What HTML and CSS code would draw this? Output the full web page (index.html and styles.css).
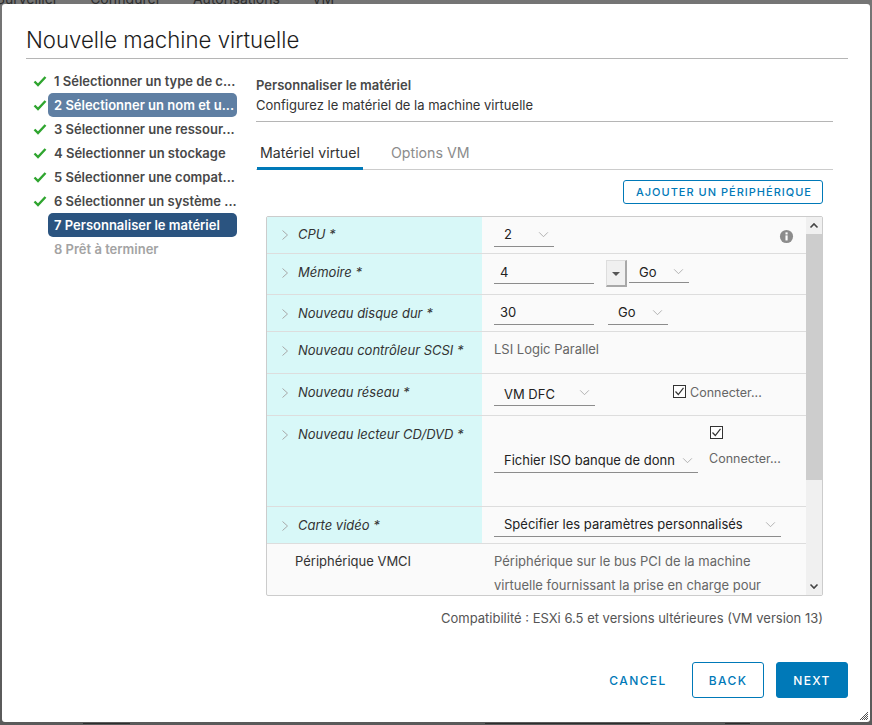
FILE: index.html
```html
<!DOCTYPE html>
<html>
<head>
  <meta charset="utf-8" />
  <title>Nouvelle machine virtuelle</title>
  <link rel="stylesheet" href="styles.css">
</head>
<body>
<!-- page behind the dialog -->
<div class="backdrop">
  <div class="backdropTop">
    <span>Surveiller</span><span>Configurer</span><span>Autorisations</span><span>VM</span>
  </div>
  <div class="backdropBottom">
    <span class="mark mark1"></span><span class="mark mark2"></span><span class="mark mark3"></span>
  </div>
</div>

<div class="modal">
  <h1 class="modalTitle">Nouvelle machine virtuelle</h1>

  <div class="modalBody">
    <!-- LEFT COLUMN -->
    <ul class="steps">
      <li class="step done"><svg class="check" viewBox="0 0 14 12"><path d="M1.5 6.5 5 10 12.5 2"/></svg><span class="stepText">1 Sélectionner un type de c...</span></li>
      <li class="step done visited"><svg class="check" viewBox="0 0 14 12"><path d="M1.5 6.5 5 10 12.5 2"/></svg><span class="stepText">2 Sélectionner un nom et u...</span></li>
      <li class="step done"><svg class="check" viewBox="0 0 14 12"><path d="M1.5 6.5 5 10 12.5 2"/></svg><span class="stepText">3 Sélectionner une ressour...</span></li>
      <li class="step done"><svg class="check" viewBox="0 0 14 12"><path d="M1.5 6.5 5 10 12.5 2"/></svg><span class="stepText">4 Sélectionner un stockage</span></li>
      <li class="step done"><svg class="check" viewBox="0 0 14 12"><path d="M1.5 6.5 5 10 12.5 2"/></svg><span class="stepText">5 Sélectionner une compat...</span></li>
      <li class="step done"><svg class="check" viewBox="0 0 14 12"><path d="M1.5 6.5 5 10 12.5 2"/></svg><span class="stepText">6 Sélectionner un système ...</span></li>
      <li class="step current"><span class="stepText">7 Personnaliser le matériel</span></li>
      <li class="step pending"><span class="stepText">8 Prêt à terminer</span></li>
    </ul>

    <!-- RIGHT COLUMN -->
    <div class="content">
      <div class="contentHeader">
        <h2>Personnaliser le matériel</h2>
        <p>Configurez le matériel de la machine virtuelle</p>
      </div>

      <div class="tabs">
        <div class="tab active">Matériel virtuel</div>
        <div class="tab">Options VM</div>
      </div>

      <div class="toolbar">
        <button class="btn btnAdd">AJOUTER UN PÉRIPHÉRIQUE</button>
      </div>

      <div class="hwTable">
        <div class="hwRows">
          <div class="row rowCpu">
            <div class="rowLabel"><svg class="caret" viewBox="0 0 8 12"><path d="M1.5 1.5 6.5 6 1.5 10.5"/></svg>CPU *</div>
            <div class="rowValue">
              <div class="select w60">2<svg class="chev" viewBox="0 0 12 8"><path d="M1 1.5 6 6.5 11 1.5"/></svg></div>
              <svg class="info" viewBox="0 0 16 16"><circle cx="8" cy="8" r="7" fill="#8c8c8c"/><rect x="6.9" y="6.8" width="2.3" height="5.4" fill="#fff"/><rect x="6.9" y="3.6" width="2.3" height="2.2" fill="#fff"/></svg>
            </div>
          </div>
          <div class="row rowMem">
            <div class="rowLabel"><svg class="caret" viewBox="0 0 8 12"><path d="M1.5 1.5 6.5 6 1.5 10.5"/></svg>Mémoire *</div>
            <div class="rowValue">
              <div class="input">4</div>
              <div class="spin"><span class="spinArrow"></span></div>
              <div class="select w60 tight">Go<svg class="chev" viewBox="0 0 12 8"><path d="M1 1.5 6 6.5 11 1.5"/></svg></div>
            </div>
          </div>
          <div class="row rowDisk">
            <div class="rowLabel"><svg class="caret" viewBox="0 0 8 12"><path d="M1.5 1.5 6.5 6 1.5 10.5"/></svg>Nouveau disque dur *</div>
            <div class="rowValue">
              <div class="input">30</div>
              <div class="select w60 after">Go<svg class="chev" viewBox="0 0 12 8"><path d="M1 1.5 6 6.5 11 1.5"/></svg></div>
            </div>
          </div>
          <div class="row rowScsi">
            <div class="rowLabel"><svg class="caret" viewBox="0 0 8 12"><path d="M1.5 1.5 6.5 6 1.5 10.5"/></svg>Nouveau contrôleur SCSI *</div>
            <div class="rowValue muted">LSI Logic Parallel</div>
          </div>
          <div class="row rowNet">
            <div class="rowLabel"><svg class="caret" viewBox="0 0 8 12"><path d="M1.5 1.5 6.5 6 1.5 10.5"/></svg>Nouveau réseau *</div>
            <div class="rowValue">
              <div class="select w101">VM DFC<svg class="chev" viewBox="0 0 12 8"><path d="M1 1.5 6 6.5 11 1.5"/></svg></div>
              <svg class="checkbox netBox" viewBox="0 0 13 13"><rect x=".5" y=".5" width="12" height="12" fill="#fff" stroke="#333"/><path d="M2.5 6.5 5.3 9.5 10.5 2.8" fill="none" stroke="#333" stroke-width="1.2"/></svg>
              <span class="connect">Connecter...</span>
            </div>
          </div>
          <div class="row rowCd">
            <div class="rowLabel"><svg class="caret" viewBox="0 0 8 12"><path d="M1.5 1.5 6.5 6 1.5 10.5"/></svg>Nouveau lecteur CD/DVD *</div>
            <div class="rowValue">
              <div class="select w204">Fichier ISO banque de donn<svg class="chev" viewBox="0 0 12 8"><path d="M1 1.5 6 6.5 11 1.5"/></svg></div>
              <div class="cdConnect">
                <svg class="checkbox" viewBox="0 0 13 13"><rect x=".5" y=".5" width="12" height="12" fill="#fff" stroke="#333"/><path d="M2.5 6.5 5.3 9.5 10.5 2.8" fill="none" stroke="#333" stroke-width="1.2"/></svg>
                <span class="connect">Connecter...</span>
              </div>
            </div>
          </div>
          <div class="row rowVideo">
            <div class="rowLabel"><svg class="caret" viewBox="0 0 8 12"><path d="M1.5 1.5 6.5 6 1.5 10.5"/></svg>Carte vidéo *</div>
            <div class="rowValue">
              <div class="select w287">Spécifier les paramètres personnalisés<svg class="chev" viewBox="0 0 12 8"><path d="M1 1.5 6 6.5 11 1.5"/></svg></div>
            </div>
          </div>
          <div class="row rowVmci">
            <div class="vmciLabel">Périphérique VMCI</div>
            <div class="vmciText muted">Périphérique sur le bus PCI de la machine virtuelle fournissant la prise en charge pour</div>
          </div>
        </div>

        <div class="scrollbar">
          <div class="scrollBtn"><svg viewBox="0 0 10 7"><path d="M1.5 5.5 5 2 8.5 5.5"/></svg></div>
          <div class="scrollTrack"><div class="scrollThumb"></div></div>
          <div class="scrollBtn"><svg viewBox="0 0 10 7"><path d="M1.5 1.5 5 5 8.5 1.5"/></svg></div>
        </div>
      </div>

      <div class="compat">Compatibilité : ESXi 6.5 et versions ultérieures (VM version 13)</div>
    </div>
  </div>

  <div class="modalFooter">
    <button class="btn btnLink">CANCEL</button>
    <button class="btn btnOutline">BACK</button>
    <button class="btn btnPrimary">NEXT</button>
  </div>

  <svg class="resizer" viewBox="0 0 8 8"><path d="M0 8 8 0M2 8 8 2M4 8 8 4M6 8 8 6"/></svg>
</div>
</body>
</html>
```

FILE: styles.css
```css
html, body {
  margin: 0;
  padding: 0;
  height: 100%;
  font-family: Inter, "Noto Sans", sans-serif;
  box-sizing: border-box;
}
*, *::before, *::after {
  box-sizing: inherit;
}

body {
  background: #5e5e5e;
  overflow: hidden;
  padding: 4px 2px 3px;
}

/* Page behind the dialog */
.backdrop {
  position: absolute;
  top: 0;
  left: 0;
  width: 100%;
  height: 100%;
  background: linear-gradient(#757575, #5a5a5a);
  display: flex;
  flex-direction: column;
  justify-content: space-between;
  overflow: hidden;
}
.backdropTop {
  display: flex;
  gap: 32px;
  margin: -10px 0 0 -4px;
  color: #2e2e2e;
  font-size: 14px;
}
.backdropBottom {
  display: flex;
  height: 2px;
  margin-left: 83px;
}
.mark {
  display: block;
  height: 1px;
  background: #2e2e2e;
}
.mark1 { width: 47px; }
.mark2 { width: 165px; margin-left: 355px; }
.mark3 { width: 25px; margin-left: 75px; }

/* Dialog */
.modal {
  position: relative;
  height: 100%;
  display: flex;
  flex-direction: column;
  background: #fff;
  border-radius: 3px;
  padding: 23px 22px 24px 24px;
  color: #333;
}
.modalTitle {
  margin: 0;
  height: 32px;
  border-bottom: 1px solid #b5b5b5;
  font-size: 22.2px;
  line-height: 26px;
  font-weight: 300;
  color: #1c1c1c;
}
.modalBody {
  flex: 1 1 auto;
  display: flex;
  min-height: 0;
}

/* Left column */
.steps {
  flex: 0 0 230px;
  list-style: none;
  margin: 10px 0 0;
  padding: 0;
}
.step {
  position: relative;
  height: 24px;
  margin-left: 22px;
  padding-left: 6px;
  width: 189px;
  border-radius: 5px;
  font-size: 13px;
  font-weight: 600;
  line-height: 24px;
  white-space: nowrap;
  color: #484848;
}
.stepText {
  display: block;
}
.check {
  position: absolute;
  left: -15px;
  top: 6px;
  width: 14px;
  height: 12px;
  fill: none;
  stroke: #2fa52f;
  stroke-width: 2.4;
}
.visited {
  background: #5f7fa3;
  color: #fff;
}
.current {
  background: #2b5480;
  color: #fff;
}
.pending {
  color: #a3a3a3;
}

/* Right column */
.content {
  flex: 0 0 577px;
  display: flex;
  flex-direction: column;
}
.contentHeader {
  height: 63px;
  padding-top: 19px;
  border-bottom: 1px solid #b5b5b5;
}
.contentHeader h2 {
  margin: 0;
  font-size: 13px;
  line-height: 14px;
  font-weight: 600;
  color: #484848;
}
.contentHeader p {
  margin: 5px 0 0;
  font-size: 13px;
  line-height: 16px;
  color: #333;
}

.tabs {
  display: flex;
  gap: 24px;
  height: 48px;
  border-bottom: 1px solid #ccc;
  font-size: 14.2px;
  align-items: flex-end;
}
.tab {
  padding: 0 4px 6px;
  height: 26px;
  line-height: 20px;
  color: #8c8c8c;
}
.tab.active {
  padding: 0 3px 2px;
  margin-left: 1px;
  color: #333;
  border-bottom: 3px solid #0079b8;
  margin-bottom: -1px;
  height: 27px;
}

.toolbar {
  display: flex;
  justify-content: flex-end;
  margin: 10px 10px 12px 0;
}

/* Buttons */
.btn {
  font-family: inherit;
  font-weight: 500;
  cursor: pointer;
  border-radius: 3px;
  border: 1px solid #0079b8;
  letter-spacing: 1px;
}
.btnAdd {
  width: 200px;
  height: 24px;
  padding: 0 0 0 2px;
  font-size: 11px;
  background: #fff;
  color: #0079b8;
}
.btnLink {
  border-color: transparent;
  background: transparent;
  color: #0079b8;
}
.btnOutline {
  background: #fff;
  color: #0079b8;
}
.btnPrimary {
  background: #0079b8;
  color: #fff;
}
.modalFooter .btn {
  width: 72px;
  height: 36px;
  padding: 0;
  font-size: 12px;
  letter-spacing: 1.4px;
}
.modalFooter .btnLink {
  padding-right: 12px;
}

/* Hardware table */
.hwTable {
  display: flex;
  height: 380px;
  margin: 0 10px;
  border: 1px solid #ccc;
  border-radius: 2px;
  background: #fafafa;
  overflow: hidden;
}
.hwRows {
  flex: 1 1 auto;
  overflow: hidden;
}
.row {
  display: flex;
  border-bottom: 1px solid #ddd;
  font-size: 13px;
}
.rowCpu { height: 37px; }
.rowMem { height: 41px; }
.rowDisk { height: 37px; }
.rowScsi { height: 42px; }
.rowNet { height: 42px; }
.rowCd { height: 91px; }
.rowVideo { height: 37px; }
.rowVmci { border-bottom: 0; }

.rowLabel {
  flex: 0 0 215px;
  display: flex;
  align-items: flex-start;
  padding: 10px 0 0 14px;
  background: #d8f8f8;
  font-style: italic;
  line-height: 16px;
  color: #333;
}
.rowCpu .rowLabel { padding-top: 9px; }
.caret {
  flex: 0 0 8px;
  width: 8px;
  height: 12px;
  margin: 3px 9px 0 0;
  fill: none;
  stroke: #a8a8a8;
  stroke-width: 1;
}
.rowValue {
  position: relative;
  flex: 1 1 auto;
  display: flex;
  align-items: flex-start;
  padding: 0 0 0 12px;
}
.muted {
  color: #666;
}
.rowScsi .rowValue {
  padding-top: 9px;
  line-height: 16px;
}

/* Form controls */
.select, .input {
  height: 24px;
  line-height: 23px;
  padding-left: 10px;
  border-bottom: 1px solid #8c8c8c;
  color: #222;
  white-space: nowrap;
}
.select {
  position: relative;
}
.input {
  width: 100px;
  padding-left: 6px;
}
.chev {
  position: absolute;
  right: 5px;
  top: 8px;
  width: 11px;
  height: 7px;
  fill: none;
  stroke: #a8a8a8;
  stroke-width: 1;
}
.w60 { width: 60px; }
.w101 { width: 101px; }
.w204 { width: 204px; }
.w287 { width: 287px; }
.tight { margin-left: 2px; }
.after { margin-left: 14px; }

.rowCpu .rowValue, .rowDisk .rowValue { padding-top: 6px; }
.rowMem .rowValue { padding-top: 6px; }
.rowMem .input { line-height: 25px; }
.rowMem .select { height: 23px; line-height: 25px; }
.rowNet .rowValue { padding-top: 7px; }
.rowNet .select { line-height: 26px; height: 25px; }
.rowCd .rowValue { padding-top: 33px; }
.rowVideo .rowValue { padding-top: 6px; }

.spin {
  width: 21px;
  height: 27px;
  margin: 0 0 0 12px;
  background: #f0f0f0;
  border: 1px solid #ddd;
  border-right: 2px solid #a8a8a8;
  border-bottom: 2px solid #a8a8a8;
  display: flex;
  align-items: center;
  justify-content: center;
}
.spinArrow {
  width: 0;
  height: 0;
  margin-top: 2px;
  border-left: 4px solid transparent;
  border-right: 4px solid transparent;
  border-top: 4px solid #555;
}
.info {
  position: absolute;
  right: 12px;
  top: 12px;
  width: 15px;
  height: 15px;
}
.checkbox {
  display: block;
  flex: 0 0 13px;
  width: 13px;
  height: 13px;
}
.netBox {
  margin: 4px 4px 0 78px;
}
.connect {
  color: #666;
  line-height: 16px;
  white-space: nowrap;
  font-size: 12.5px;
}
.rowNet .connect {
  margin-top: 4px;
}
.cdConnect {
  display: flex;
  flex-direction: column;
  margin: -23px 0 0 11px;
}
.cdConnect .checkbox {
  margin: 0 0 0 1px;
}
.cdConnect .connect {
  margin-top: 12px;
}

.vmciLabel {
  flex: 0 0 215px;
  padding: 5px 0 0 28px;
  line-height: 24px;
  color: #333;
}
.vmciText {
  flex: 0 0 310px;
  padding: 5px 0 0 12px;
  line-height: 24px;
}

/* Scrollbar */
.scrollbar {
  flex: 0 0 16px;
  display: flex;
  flex-direction: column;
  background: #f0f0f0;
}
.scrollBtn {
  flex: 0 0 17px;
  display: flex;
  align-items: center;
  justify-content: center;
}
.scrollBtn svg {
  width: 10px;
  height: 7px;
  fill: none;
  stroke: #444;
  stroke-width: 1.6;
}
.scrollTrack {
  flex: 1 1 auto;
}
.scrollThumb {
  height: 246px;
  background: #cdcdcd;
}

.compat {
  margin: 14px 10px 0 0;
  text-align: right;
  font-size: 13px;
  line-height: 16px;
  color: #555;
}

.modalFooter {
  display: flex;
  justify-content: flex-end;
  gap: 12px;
}
.resizer {
  position: absolute;
  right: 2px;
  bottom: 2px;
  width: 8px;
  height: 8px;
  fill: none;
  stroke: #555;
  stroke-width: 1;
}
```
